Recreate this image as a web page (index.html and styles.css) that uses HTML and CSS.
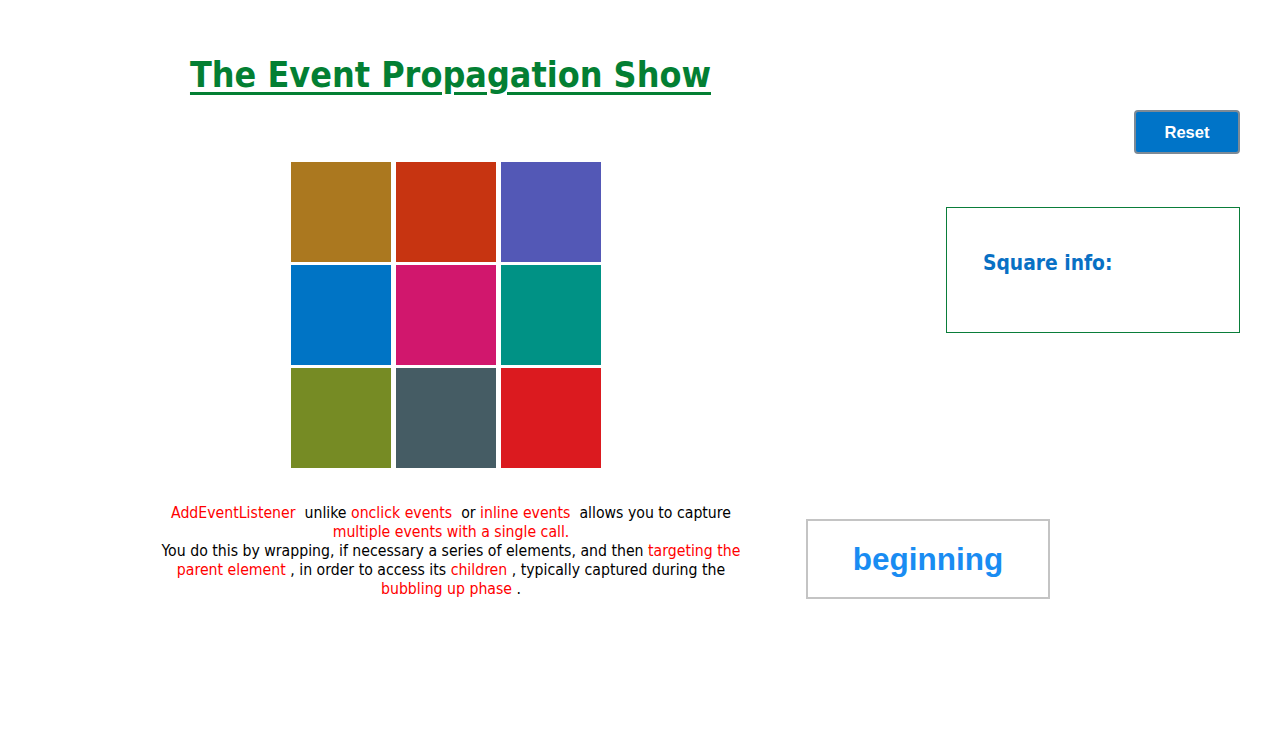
FILE: index.html
```html
<!DOCTYPE html>
<html>
<head>
<meta charset="utf-8">
<link rel="stylesheet" href="styles.css">
</head>
<body>
<div class="page">
  <div class="top">
    <div class="left">
      <h1 class="title">The Event Propagation Show</h1>
      <div class="grid">
        <div class="sq" style="background:#ab781f"></div>
        <div class="sq" style="background:#c73411"></div>
        <div class="sq" style="background:#5358b6"></div>
        <div class="sq" style="background:#0074c5"></div>
        <div class="sq" style="background:#d1176d"></div>
        <div class="sq" style="background:#009285"></div>
        <div class="sq" style="background:#768b24"></div>
        <div class="sq" style="background:#455c64"></div>
        <div class="sq" style="background:#db1a1f"></div>
      </div>
    </div>
    <div class="right">
      <button class="reset">Reset</button>
      <div class="info">
        <h3 class="info-title">Square info:</h3>
      </div>
    </div>
  </div>
  <div class="bottom">
    <p class="desc"><span class="hl">AddEventListener</span>&nbsp; unlike <span class="hl">onclick events</span>&nbsp; or <span class="hl">inline events</span>&nbsp; allows you to capture <span class="hl">multiple events with a single call.</span><br>You do this by wrapping, if necessary a series of elements, and then <span class="hl">targeting the parent element</span> , in order to access its <span class="hl">children</span> , typically captured during the <span class="hl">bubbling up phase</span> .</p>
    <div class="phase">beginning</div>
  </div>
</div>
</body>
</html>
```
FILE: styles.css
```css
html, body {
  margin: 0;
  padding: 0;
  background: #ffffff;
}
body {
  font-family: "DejaVu Sans Condensed", "DejaVu Sans", sans-serif;
  font-stretch: condensed;
}
.page {
  width: 1288px;
}
.top {
  display: flex;
}
.left {
  width: 901px;
  display: flex;
  flex-direction: column;
  align-items: center;
}
.title {
  margin: 53px 0 0 0;
  font-size: 35.6px;
  line-height: 44px;
  font-weight: bold;
  color: #037f33;
  text-decoration: underline;
  text-decoration-thickness: 3px;
  text-underline-offset: 5px;
}
.grid {
  margin-top: 65px;
  margin-right: 10px;
  display: grid;
  grid-template-columns: repeat(3, 100px);
  grid-auto-rows: 100px;
  column-gap: 5px;
  row-gap: 3px;
}
.right {
  flex: 1;
  padding-right: 48px;
  display: flex;
  flex-direction: column;
  align-items: flex-end;
}
.reset {
  margin-top: 110px;
  width: 106px;
  height: 44px;
  background: #0074c8;
  color: #ffffff;
  font-family: "Liberation Sans", Arial, sans-serif;
  font-weight: bold;
  font-size: 16.5px;
  border: 2px solid #7d8a96;
  border-radius: 4px;
  padding: 0;
}
.info {
  margin-top: 53px;
  width: 292px;
  height: 124px;
  border: 1px solid #0a7d3a;
  box-sizing: content-box;
}
.info-title {
  margin: 43px 0 0 36px;
  font-size: 20.8px;
  font-weight: bold;
  color: #0870c4;
}
.bottom {
  display: flex;
  align-items: flex-start;
  margin-top: 32px;
}
.desc {
  margin: 3px 0 0 156px;
  width: 590px;
  text-align: center;
  font-size: 15.7px;
  line-height: 19px;
  color: #000000;
}
.hl {
  color: #ff0000;
}
.phase {
  margin-left: 60px;
  margin-top: 19px;
  width: 240px;
  height: 76px;
  border: 2px solid #c4c4c4;
  display: flex;
  align-items: center;
  justify-content: center;
  font-family: "Liberation Sans", Arial, sans-serif;
  font-weight: bold;
  font-size: 31.5px;
  color: #198cf2;
}
```
